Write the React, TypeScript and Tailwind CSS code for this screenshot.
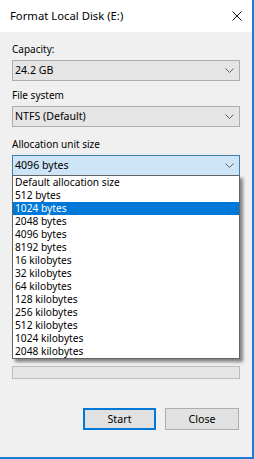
const font = { fontFamily: '"Segoe UI", "Noto Sans", "Open Sans", sans-serif' };

function Chevron() {
  return (
    <svg width="9" height="5" viewBox="0 0 9 5" className="shrink-0">
      <path d="M0.5 0.5 L4.5 4.5 L8.5 0.5" fill="none" stroke="#5f5f5f" strokeWidth="1" />
    </svg>
  );
}

function Combo({ value, active }: { value: string; active?: boolean }) {
  return (
    <div
      className={
        active
          ? "h-[21px] flex items-center justify-between pl-[2px] pr-[5px] border border-[#3c7fb1] bg-[#cde5f7]"
          : "h-[21px] flex items-center justify-between pl-[2px] pr-[5px] border border-[#adadad] bg-[#e5e5e5]"
      }
    >
      <span className="text-[10.6px] leading-none text-black">{value}</span>
      <Chevron />
    </div>
  );
}

const sizes = [
  "Default allocation size",
  "512 bytes",
  "1024 bytes",
  "2048 bytes",
  "4096 bytes",
  "8192 bytes",
  "16 kilobytes",
  "32 kilobytes",
  "64 kilobytes",
  "128 kilobytes",
  "256 kilobytes",
  "512 kilobytes",
  "1024 kilobytes",
  "2048 kilobytes",
];

export default function App() {
  return (
    <div
      className="w-[254px] h-[459px] flex flex-col bg-[#f0f0f0] border-r-2 border-b-2 border-[#1a7fd4] text-black"
      style={font}
    >
      {/* title bar */}
      <div className="h-[32px] shrink-0 bg-white flex items-center justify-between pl-[10px] pr-[10px]">
        <span className="text-[11.3px]">Format Local Disk (E:)</span>
        <svg width="10" height="10" viewBox="0 0 10 10">
          <path d="M0.5 0.5 L9.5 9.5 M9.5 0.5 L0.5 9.5" stroke="#111" strokeWidth="1" />
        </svg>
      </div>

      <div className="flex-1 flex flex-col px-[12px]">
        <div className="h-[28px] flex items-end pb-[6px] text-[10px] leading-none">Capacity:</div>
        <Combo value="24.2 GB" />
        <div className="h-[25px] flex items-end pb-[6px] text-[10px] leading-none">File system</div>
        <Combo value="NTFS (Default)" />
        <div className="h-[28px] flex items-end pb-[6px] text-[10px] leading-none">Allocation unit size</div>

        <div className="relative">
          <Combo value="4096 bytes" active />
          {/* open drop-down list */}
          <div className="absolute left-0 right-0 top-[20px] z-10 bg-white border border-[#646464] shadow-[3px_3px_3px_rgba(0,0,0,0.45)]">
            {sizes.map((s) => (
              <div
                key={s}
                className={
                  s === "1024 bytes"
                    ? "h-[13px] flex items-center pl-[2px] text-[10.2px] leading-none bg-[#0078d7] text-white"
                    : "h-[13px] flex items-center pl-[2px] text-[10.2px] leading-none text-black"
                }
              >
                {s}
              </div>
            ))}
          </div>
        </div>

        {/* covered area + progress bar */}
        <div className="h-[190px]" />
        <div className="h-[13px] border border-[#bcbcbc] bg-[#e6e6e6]" />

        <div className="flex justify-end gap-[9px] mt-[29px] pr-[1px]">
          <button className="w-[73px] h-[22px] border-2 border-[#0078d7] bg-[#e1e1e1] text-[10.7px] leading-none">
            Start
          </button>
          <button className="w-[74px] h-[22px] border border-[#adadad] bg-[#e1e1e1] text-[10.7px] leading-none">
            Close
          </button>
        </div>
      </div>
    </div>
  );
}
